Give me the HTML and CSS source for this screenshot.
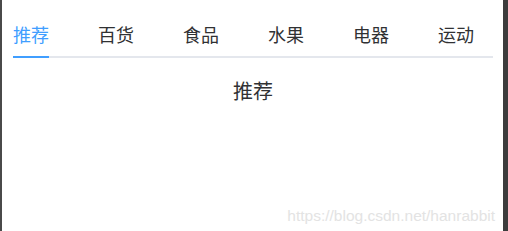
FILE: index.html
```html
<!DOCTYPE html>
<html lang="zh-CN">
<head>
    <meta charset="UTF-8">
    <meta name="viewport" content="width=device-width, initial-scale=1.0">
    <title>Tabs</title>
    <link rel="stylesheet" href="styles.css">
</head>
<body>

<div class="frame">
    <div class="tabs">
        <div class="tabs-header">
            <div class="tab active">推荐</div>
            <div class="tab">百货</div>
            <div class="tab">食品</div>
            <div class="tab">水果</div>
            <div class="tab">电器</div>
            <div class="tab">运动</div>
        </div>
        <div class="tabs-content">推荐</div>
    </div>
    <div class="watermark">https://blog.csdn.net/hanrabbit</div>
</div>

</body>
</html>
```

FILE: styles.css
```css
* {
    box-sizing: border-box;
    margin: 0;
    padding: 0;
}

body {
    background: #3c3c3c;
    width: 508px;
    height: 231px;
    overflow: hidden;
    font-family: "Noto Sans CJK SC", "Liberation Sans", sans-serif;
}

.frame {
    position: relative;
    width: 503px;
    height: 231px;
    background: #fff;
    border-left: 2px solid #4a4a4a;
    padding: 0 10px 0 11px;
}

.tabs-header {
    display: flex;
    gap: 49px;
    padding-top: 15px;
    border-bottom: 2px solid #e4e7ed;
}

.tab {
    font-size: 18px;
    line-height: 38px;
    height: 43px;
    margin-bottom: -2px;
    color: #303133;
}

.tab.active {
    color: #409eff;
    border-bottom: 2px solid #409eff;
}

.tabs-content {
    text-align: center;
    font-size: 20px;
    line-height: 30px;
    margin-top: 18px;
    color: #303133;
}

.watermark {
    position: absolute;
    right: 8px;
    bottom: 6px;
    font-family: "Liberation Sans", Arial, sans-serif;
    font-size: 15.5px;
    color: #e3e3e3;
}
```
